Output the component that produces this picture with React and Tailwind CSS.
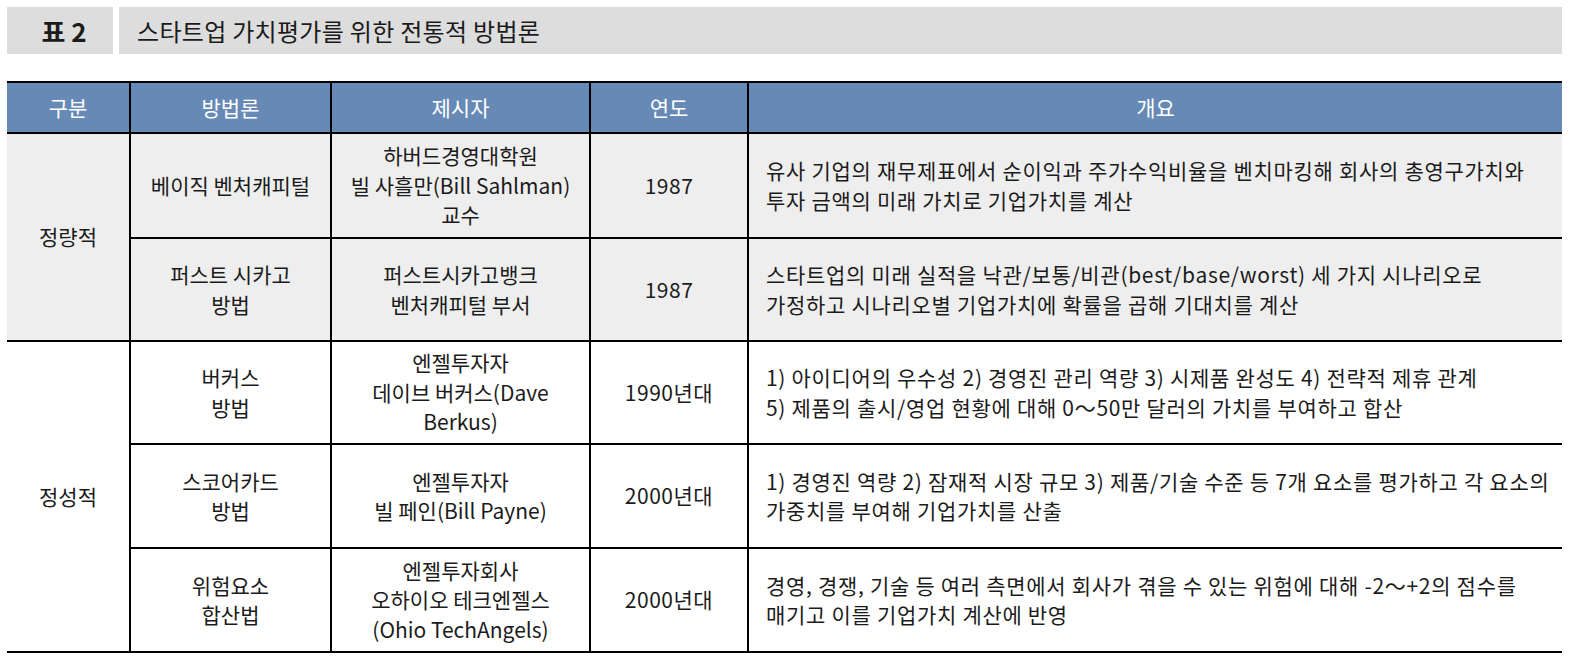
const FONT = { fontFamily: '"Noto Sans CJK KR", "Noto Sans", sans-serif' };

const ROWS = [
    {
        group: '정량적',
        span: 2,
        shade: true,
        method: ['베이직 벤처캐피털'],
        author: ['하버드경영대학원', '빌 사흘만(Bill Sahlman)', '교수'],
        year: '1987',
        summary: ['유사 기업의 재무제표에서 순이익과 주가수익비율을 벤치마킹해 회사의 총영구가치와', '투자 금액의 미래 가치로 기업가치를 계산'],
        h: 'h-[105px]'
    },
    {
        shade: true,
        method: ['퍼스트 시카고', '방법'],
        author: ['퍼스트시카고뱅크', '벤처캐피털 부서'],
        year: '1987',
        summary: ['스타트업의 미래 실적을 낙관/보통/비관(best/base/worst) 세 가지 시나리오로', '가정하고 시나리오별 기업가치에 확률을 곱해 기대치를 계산'],
        h: 'h-[103px]'
    },
    {
        group: '정성적',
        span: 3,
        method: ['버커스', '방법'],
        author: ['엔젤투자자', '데이브 버커스(Dave', 'Berkus)'],
        year: '1990년대',
        summary: ['1) 아이디어의 우수성 2) 경영진 관리 역량 3) 시제품 완성도 4) 전략적 제휴 관계', '5) 제품의 출시/영업 현황에 대해 0～50만 달러의 가치를 부여하고 합산'],
        h: 'h-[103px]'
    },
    {
        method: ['스코어카드', '방법'],
        author: ['엔젤투자자', '빌 페인(Bill Payne)'],
        year: '2000년대',
        summary: ['1) 경영진 역량 2) 잠재적 시장 규모 3) 제품/기술 수준 등 7개 요소를 평가하고 각 요소의', '가중치를 부여해 기업가치를 산출'],
        h: 'h-[104px]'
    },
    {
        method: ['위험요소', '합산법'],
        author: ['엔젤투자회사', '오하이오 테크엔젤스', '(Ohio TechAngels)'],
        year: '2000년대',
        summary: ['경영, 경쟁, 기술 등 여러 측면에서 회사가 겪을 수 있는 위험에 대해 -2～+2의 점수를', '매기고 이를 기업가치 계산에 반영'],
        h: 'h-[104px]'
    }
];

function Lines({ items }) {
    return items.map((line, i) => (
        <div key={i}>{line}</div>
    ));
}

export default function App() {
    return (
        <div className="w-[1569px] h-[664px] bg-white text-[#1b1b1b]" style={FONT}>
            <div className="flex gap-[6px] pt-[7px] pl-[7px] pr-[7px]">
                <div className="flex h-[47px] w-[106px] items-center justify-center bg-[#dcdddc] pl-[8px] text-[26px] font-bold">
                    표 2
                </div>
                <div className="flex h-[47px] flex-1 items-center bg-[#dcdddc] pl-[18px] text-[24px] tracking-[0.3px]">
                    스타트업 가치평가를 위한 전통적 방법론
                </div>
            </div>

            <div className="pt-[27px] pl-[7px] pr-[7px]">
                <table className="w-full table-fixed border-collapse text-[21px] leading-[29.5px]">
                    <colgroup>
                        <col className="w-[123px]" />
                        <col className="w-[201px]" />
                        <col className="w-[259px]" />
                        <col className="w-[158px]" />
                        <col />
                    </colgroup>
                    <thead>
                        <tr className="h-[51px] bg-[#6789b6] text-white">
                            <th className="border-y-2 border-black font-normal">구분</th>
                            <th className="border-2 border-black font-normal">방법론</th>
                            <th className="border-2 border-black font-normal">제시자</th>
                            <th className="border-2 border-black font-normal">연도</th>
                            <th className="border-y-2 border-black font-normal">개요</th>
                        </tr>
                    </thead>
                    <tbody>
                        {ROWS.map((row, i) => {
                            const bg = row.shade ? 'bg-[#eeeeee]' : 'bg-white';
                            return (
                                <tr key={i} className={row.h}>
                                    {row.group && (
                                        <td rowSpan={row.span} className={`border-y-2 border-black text-center ${bg}`}>
                                            {row.group}
                                        </td>
                                    )}
                                    <td className={`border-2 border-black text-center ${bg}`}>
                                        <Lines items={row.method} />
                                    </td>
                                    <td className={`border-2 border-black text-center ${bg}`}>
                                        <Lines items={row.author} />
                                    </td>
                                    <td className={`border-2 border-black text-center tracking-[0.5px] ${bg}`}>{row.year}</td>
                                    <td className={`border-y-2 border-black pl-[17px] text-left tracking-[0.7px] whitespace-nowrap ${bg}`}>
                                        <Lines items={row.summary} />
                                    </td>
                                </tr>
                            );
                        })}
                    </tbody>
                </table>
            </div>
        </div>
    );
}
